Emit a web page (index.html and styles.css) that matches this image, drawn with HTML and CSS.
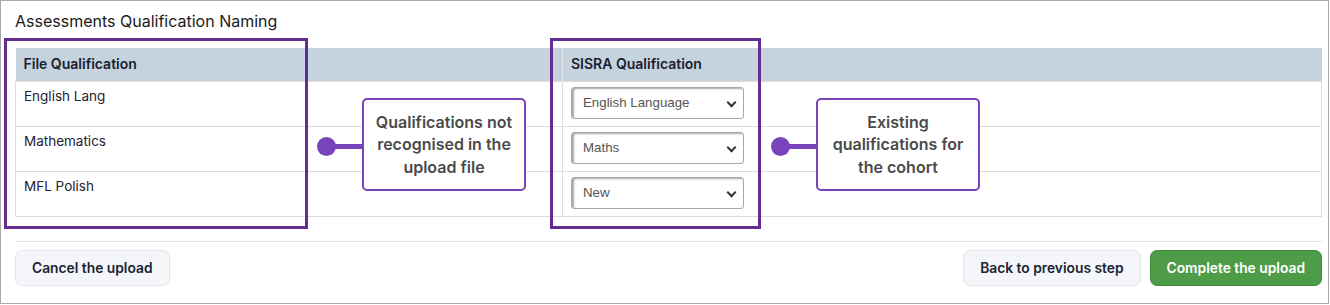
FILE: index.html
```html
<!DOCTYPE html>
<html lang="en">
<head>
  <meta charset="UTF-8" />
  <title>Assessments Qualification Naming</title>
  <link rel="stylesheet" href="styles.css">
</head>
<body>
  <div class="panel">
    <h2 class="title">Assessments Qualification Naming</h2>

    <table class="naming">
      <thead>
        <tr>
          <th class="col-file">File Qualification</th>
          <th>SISRA Qualification</th>
        </tr>
      </thead>
      <tbody>
        <tr>
          <td>English Lang</td>
          <td>
            <div class="select">English Language</div>
          </td>
        </tr>
        <tr>
          <td>Mathematics</td>
          <td>
            <div class="select">Maths</div>
          </td>
        </tr>
        <tr>
          <td>MFL Polish</td>
          <td>
            <div class="select">New</div>
          </td>
        </tr>
      </tbody>
    </table>

    <div class="actions">
      <button class="btn">Cancel the upload</button>
      <div class="actions-right">
        <button class="btn">Back to previous step</button>
        <button class="btn btn-primary">Complete the upload</button>
      </div>
    </div>

    <!-- Annotation overlays -->
    <div class="highlight hl-file"></div>
    <div class="highlight hl-sisra"></div>

    <div class="callout callout-file">
      <span class="pin"></span>
      Qualifications not recognised in the upload file
    </div>
    <div class="callout callout-sisra">
      <span class="pin"></span>
      Existing qualifications for the cohort
    </div>
  </div>
</body>
</html>
```

FILE: styles.css
```css
/* Reset and basic styles */
* {
  box-sizing: border-box;
  margin: 0;
  padding: 0;
}
body {
  background: #fff;
  font-family: Inter, 'Noto Sans', sans-serif;
  color: #1f2430;
}
/* Outer panel */
.panel {
  position: relative;
  width: 1329px;
  height: 304px;
  border: 1px solid #a9a9a9;
  padding: 0 6px 0 14px;
}
.title {
  font-size: 16px;
  font-weight: 400;
  color: #1a1a1a;
  line-height: 20px;
  padding-top: 10px;
  height: 47px;
}
/* Table */
.naming {
  width: 100%;
  border-collapse: collapse;
  font-size: 13.5px;
}
.naming th {
  background: #c5d3de;
  text-align: left;
  font-weight: 600;
  font-size: 14px;
  height: 33px;
  padding: 0 8px 1px;
  color: #1b2130;
}
.naming th.col-file {
  width: 547px;
  border-right: 1px solid #e3e8ec;
}
.naming td {
  border: 1px solid #dcdcdc;
  height: 45px;
  padding: 5px 8px 0;
  vertical-align: top;
  line-height: 17px;
  color: #1f2430;
}
.naming td:first-child {
  padding-top: 6px;
}
/* Dropdown look */
.select {
  position: relative;
  width: 173px;
  height: 32px;
  border: 1px solid #a8a8a8;
  border-radius: 3px;
  box-shadow: inset 2px 1px 2px rgba(0, 0, 0, 0.35);
  padding: 0 11px;
  font-family: 'Liberation Sans', Arial, sans-serif;
  font-size: 13.3px;
  line-height: 30px;
  color: #555;
}
.select::after {
  content: '';
  position: absolute;
  right: 8px;
  top: 11px;
  width: 5px;
  height: 5px;
  border-right: 2px solid #333;
  border-bottom: 2px solid #333;
  transform: rotate(45deg);
}
/* Footer buttons */
.actions {
  display: flex;
  justify-content: space-between;
  margin-top: 24px;
  padding-top: 8px;
  border-top: 1px solid #e4e4e4;
}
.actions-right {
  display: flex;
  gap: 9px;
}
.btn {
  font-family: Inter, 'Noto Sans', sans-serif;
  font-size: 13.8px;
  font-weight: 600;
  height: 36px;
  padding: 0 16px;
  border: 1px solid #e2e5ea;
  border-radius: 7px;
  background: #f5f6f9;
  color: #1c2434;
}
.btn-primary {
  background: #4f9c48;
  border-color: #3f8b39;
  color: #fff;
}
/* Annotation overlays */
.highlight {
  position: absolute;
  top: 37px;
  height: 191px;
  border: 3px solid #662d91;
}
.hl-file {
  left: 3px;
  width: 304px;
}
.hl-sisra {
  left: 549px;
  width: 211px;
}
.callout {
  position: absolute;
  top: 97px;
  width: 164px;
  height: 93px;
  border: 2px solid #7744bb;
  border-radius: 5px;
  background: #fff;
  display: flex;
  align-items: center;
  justify-content: center;
  text-align: center;
  padding: 0 8px;
  font-size: 16px;
  font-weight: 600;
  line-height: 22.5px;
  color: #4a4a4a;
}
.callout-file {
  left: 361px;
}
.callout-sisra {
  left: 815px;
}
.pin {
  position: absolute;
  left: -46px;
  top: 44px;
  width: 46px;
  height: 5px;
  background: #7744bb;
}
.pin::before {
  content: '';
  position: absolute;
  left: -1px;
  top: -7px;
  width: 19px;
  height: 19px;
  border-radius: 50%;
  background: #7744bb;
}
```
